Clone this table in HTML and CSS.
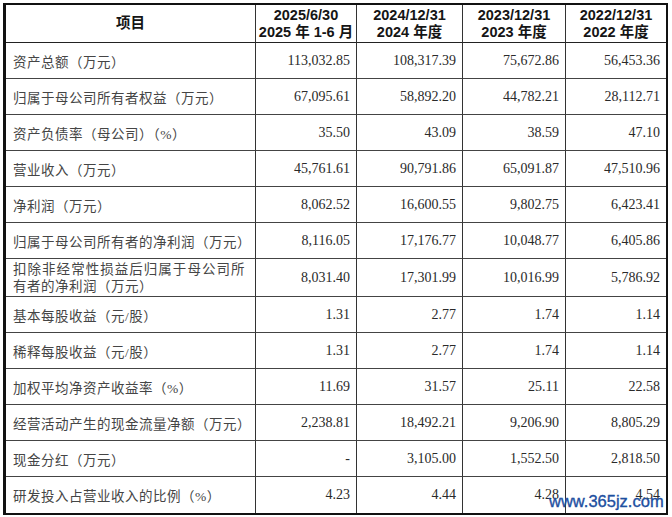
FILE: index.html
```html
<!DOCTYPE html>
<html lang="zh-CN">
<head>
<meta charset="utf-8">
<title>主要财务数据</title>
<link rel="stylesheet" href="styles.css">
</head>
<body>
<div class="sheet">
  <div class="grid">
    <div class="cell head"><span>项目</span></div>
    <div class="cell head"><span>2025/6/30</span><span>2025 年 1-6 月</span></div>
    <div class="cell head"><span>2024/12/31</span><span>2024 年度</span></div>
    <div class="cell head"><span>2023/12/31</span><span>2023 年度</span></div>
    <div class="cell head"><span>2022/12/31</span><span>2022 年度</span></div>

    <div class="cell label">资产总额（万元）</div>
    <div class="cell num">113,032.85</div>
    <div class="cell num">108,317.39</div>
    <div class="cell num">75,672.86</div>
    <div class="cell num">56,453.36</div>

    <div class="cell label">归属于母公司所有者权益（万元）</div>
    <div class="cell num">67,095.61</div>
    <div class="cell num">58,892.20</div>
    <div class="cell num">44,782.21</div>
    <div class="cell num">28,112.71</div>

    <div class="cell label">资产负债率（母公司）（%）</div>
    <div class="cell num">35.50</div>
    <div class="cell num">43.09</div>
    <div class="cell num">38.59</div>
    <div class="cell num">47.10</div>

    <div class="cell label">营业收入（万元）</div>
    <div class="cell num">45,761.61</div>
    <div class="cell num">90,791.86</div>
    <div class="cell num">65,091.87</div>
    <div class="cell num">47,510.96</div>

    <div class="cell label">净利润（万元）</div>
    <div class="cell num">8,062.52</div>
    <div class="cell num">16,600.55</div>
    <div class="cell num">9,802.75</div>
    <div class="cell num">6,423.41</div>

    <div class="cell label">归属于母公司所有者的净利润（万元）</div>
    <div class="cell num">8,116.05</div>
    <div class="cell num">17,176.77</div>
    <div class="cell num">10,048.77</div>
    <div class="cell num">6,405.86</div>

    <div class="cell label two"><span class="line just">扣除非经常性损益后归属于母公司所</span><span class="line">有者的净利润（万元）</span></div>
    <div class="cell num">8,031.40</div>
    <div class="cell num">17,301.99</div>
    <div class="cell num">10,016.99</div>
    <div class="cell num">5,786.92</div>

    <div class="cell label">基本每股收益（元/股）</div>
    <div class="cell num">1.31</div>
    <div class="cell num">2.77</div>
    <div class="cell num">1.74</div>
    <div class="cell num">1.14</div>

    <div class="cell label">稀释每股收益（元/股）</div>
    <div class="cell num">1.31</div>
    <div class="cell num">2.77</div>
    <div class="cell num">1.74</div>
    <div class="cell num">1.14</div>

    <div class="cell label">加权平均净资产收益率（%）</div>
    <div class="cell num">11.69</div>
    <div class="cell num">31.57</div>
    <div class="cell num">25.11</div>
    <div class="cell num">22.58</div>

    <div class="cell label">经营活动产生的现金流量净额（万元）</div>
    <div class="cell num">2,238.81</div>
    <div class="cell num">18,492.21</div>
    <div class="cell num">9,206.90</div>
    <div class="cell num">8,805.29</div>

    <div class="cell label">现金分红（万元）</div>
    <div class="cell num">-</div>
    <div class="cell num">3,105.00</div>
    <div class="cell num">1,552.50</div>
    <div class="cell num">2,818.50</div>

    <div class="cell label">研发投入占营业收入的比例（%）</div>
    <div class="cell num">4.23</div>
    <div class="cell num">4.44</div>
    <div class="cell num">4.28</div>
    <div class="cell num">4.54</div>
  </div>
  <div class="watermark">www.365jz.com</div>
</div>
</body>
</html>
```
FILE: styles.css
```css
html, body {
  margin: 0;
  padding: 0;
  background: #ffffff;
}

.sheet {
  position: relative;
  width: 672px;
  height: 517px;
  padding: 3px 0 0 3px;
  box-sizing: border-box;
}

.grid {
  display: grid;
  grid-template-columns: 250px 101px 106px 103px 100px;
  grid-template-rows: 38px repeat(6, 36px) 38px repeat(6, 36px);
  width: 660px;
  border-top: 2px solid #111;
  border-bottom: 2px solid #111;
  border-left: 3px solid #111;
  border-right: 2px solid #111;
}

.cell {
  box-sizing: border-box;
  display: flex;
  align-items: center;
  border-right: 1px solid #333;
  border-bottom: 1px solid #444;
  color: #2e2e2e;
  overflow: hidden;
}

.cell:nth-child(5n) {
  border-right: none;
}

.cell:nth-last-child(-n+5) {
  border-bottom: none;
}

.head {
  flex-direction: column;
  justify-content: center;
  text-align: center;
  font-family: "Liberation Sans", "Noto Sans CJK SC", sans-serif;
  font-weight: bold;
  font-size: 14.5px;
  line-height: 17px;
  color: #151515;
  border-bottom: 1px solid #222;
}

.label {
  padding: 0 10px 0 7px;
  font-family: "Liberation Serif", "Noto Sans CJK SC", serif;
  font-weight: 400;
  font-size: 13.5px;
  letter-spacing: 0.5px;
  color: #454545;
  white-space: nowrap;
}

.two {
  flex-direction: column;
  align-items: stretch;
  justify-content: center;
  line-height: 17px;
}

.line {
  display: block;
}

.just {
  text-align: justify;
  text-align-last: justify;
}

.num {
  justify-content: flex-end;
  padding-right: 6px;
  font-family: "Liberation Serif", serif;
  font-size: 14px;
  color: #2a2a2a;
}

.watermark {
  position: absolute;
  left: 549px;
  top: 493px;
  font-family: "Liberation Sans", sans-serif;
  font-size: 16.5px;
  line-height: 16px;
  color: #1d4f9f;
  -webkit-text-stroke: 0.35px #1d4f9f;
  white-space: nowrap;
}
```
